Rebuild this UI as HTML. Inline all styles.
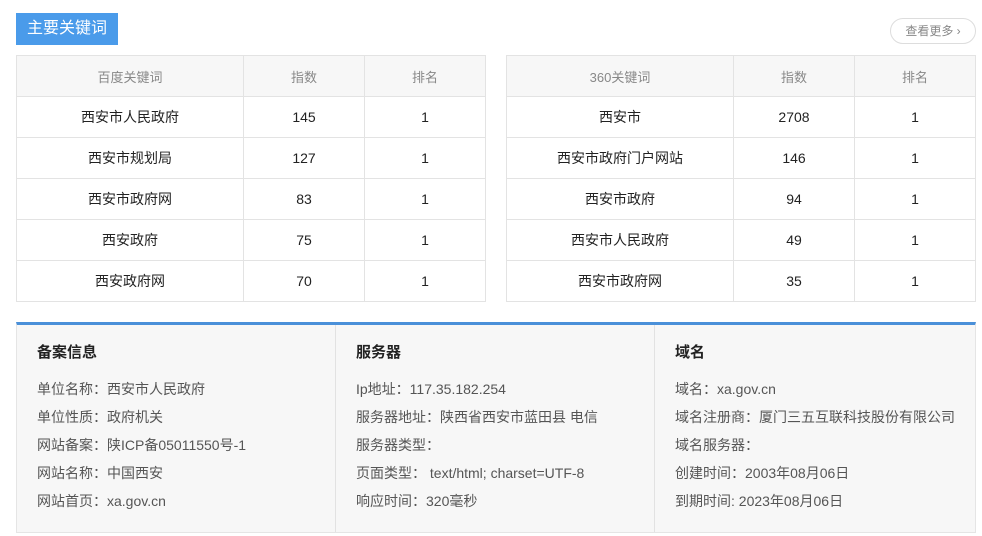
<!DOCTYPE html>
<html><head><meta charset="utf-8"><style>
*{margin:0;padding:0;box-sizing:border-box}
body{width:982px;height:536px;background:#fff;font-family:"Liberation Sans","Noto Sans CJK SC",sans-serif;position:relative;overflow:hidden}
.btn{position:absolute;left:16px;top:13px;width:102px;height:32px;background:#4a9bea;color:#fff;font-size:16px;line-height:32px;text-align:center}
.more{position:absolute;left:890px;top:18px;width:86px;height:26px;border:1px solid #ddd;border-radius:13px;color:#888;font-size:12px;line-height:24px;text-align:center}
table{position:absolute;top:55px;width:470px;border-collapse:collapse;font-size:14px;color:#222}
td,th{border:1px solid #e3e3e3;height:41px;text-align:center;font-weight:normal}
th{background:#f7f7f7;color:#888;font-size:13px}
.c1{width:227px}.c2{width:121px}
.info{position:absolute;left:16px;top:322px;width:960px;height:211px;border-top:3px solid #4a90d9;background:#f7f7f7;border-left:1px solid #e5e5e5;border-right:1px solid #e5e5e5;border-bottom:1px solid #e5e5e5;display:flex}
.col{padding:16px 0 0 20px;border-right:1px solid #e2e2e2;font-size:14px;color:#555}
.col:last-child{border-right:none}
.col h3{font-size:15px;color:#222;font-weight:bold;height:26px;margin-bottom:12px}
.col p{height:28px;line-height:20px}
</style></head><body>
<div class="btn">主要关键词</div>
<div class="more">查看更多 ›</div>
<table style="left:16px"><tr><th class="c1">百度关键词</th><th class="c2">指数</th><th>排名</th></tr>
<tr><td>西安市人民政府</td><td>145</td><td>1</td></tr>
<tr><td>西安市规划局</td><td>127</td><td>1</td></tr>
<tr><td>西安市政府网</td><td>83</td><td>1</td></tr>
<tr><td>西安政府</td><td>75</td><td>1</td></tr>
<tr><td>西安政府网</td><td>70</td><td>1</td></tr></table>
<table style="left:506px"><tr><th class="c1">360关键词</th><th class="c2">指数</th><th>排名</th></tr>
<tr><td>西安市</td><td>2708</td><td>1</td></tr>
<tr><td>西安市政府门户网站</td><td>146</td><td>1</td></tr>
<tr><td>西安市政府</td><td>94</td><td>1</td></tr>
<tr><td>西安市人民政府</td><td>49</td><td>1</td></tr>
<tr><td>西安市政府网</td><td>35</td><td>1</td></tr></table>
<div class="info">
<div class="col" style="width:319px"><h3>备案信息</h3><p>单位名称：西安市人民政府</p><p>单位性质：政府机关</p><p>网站备案：陕ICP备05011550号-1</p><p>网站名称：中国西安</p><p>网站首页：xa.gov.cn</p></div>
<div class="col" style="width:319px"><h3>服务器</h3><p>Ip地址：117.35.182.254</p><p>服务器地址：陕西省西安市蓝田县 电信</p><p>服务器类型：</p><p>页面类型： text/html; charset=UTF-8</p><p>响应时间：320毫秒</p></div>
<div class="col" style="flex:1"><h3>域名</h3><p>域名：xa.gov.cn</p><p>域名注册商：厦门三五互联科技股份有限公司</p><p>域名服务器：</p><p>创建时间：2003年08月06日</p><p>到期时间: 2023年08月06日</p></div>
</div>
</body></html>
